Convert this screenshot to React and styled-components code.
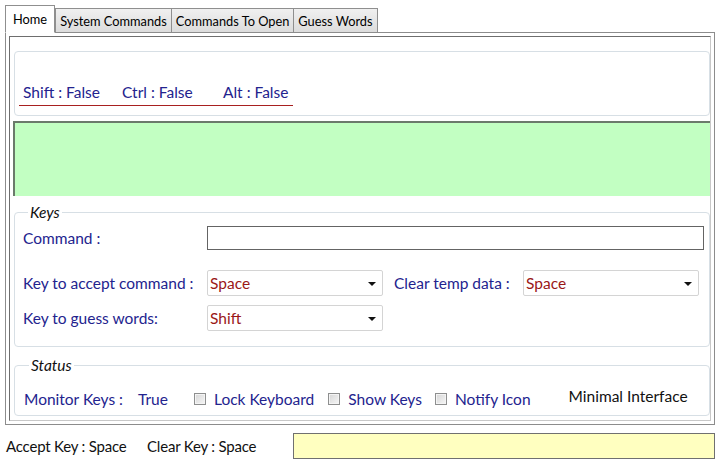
import React from 'react';
import styled, { createGlobalStyle } from 'styled-components';

const GlobalStyle = createGlobalStyle`
  html, body { margin: 0; padding: 0; background: #fff; }
  body { font-family: Lato, "Liberation Sans", sans-serif; }
`;

const Window = styled.div`
  width: 721px;
  height: 466px;
  display: flex;
  flex-direction: column;
  background: #fff;
`;

const TabStrip = styled.div`
  display: flex;
  align-items: flex-end;
  height: 32px;
  padding-left: 5px;
  position: relative;
  z-index: 1;
`;

const Tab = styled.div`
  box-sizing: border-box;
  height: ${p => (p.$active ? '28px' : '24px')};
  padding: 0 ${p => (p.$active ? '7px' : '4px')};
  margin-bottom: ${p => (p.$active ? '-1px' : '0')};
  border: 1px solid #8f8f8f;
  border-bottom: ${p => (p.$active ? '1px solid #fff' : 'none')};
  background: ${p => (p.$active ? '#fff' : 'linear-gradient(#f0f0f0, #dcdcdc)')};
  font-size: 12.8px;
  color: #000;
  display: flex;
  align-items: center;
  margin-left: ${p => (p.$active ? '0' : '-1px')};
  &:nth-child(2) { margin-left: 0; }
`;

const Panel = styled.div`
  margin: 0 6px 0 5px;
  height: 393px;
  box-sizing: border-box;
  border: 1px solid #8c8c8c;
  padding: 3px;
`;

const Inner = styled.div`
  height: 100%;
  box-sizing: border-box;
  border: 1px solid #6e6e6e;
  border-right-color: #c8c8c8;
  border-bottom-color: #c8c8c8;
  padding: 14px 0 3px 4px;
  display: flex;
  flex-direction: column;
`;

const ModBox = styled.div`
  height: 65px;
  border: 1px solid #d7dfe5;
  border-radius: 4px;
  display: flex;
  align-items: flex-end;
  padding: 0 0 9px 4px;
  box-sizing: border-box;
`;

const ModLine = styled.div`
  display: flex;
  padding: 0 5px 4px 4px;
  border-bottom: 1px solid #a82020;
`;

const Label = styled.span`
  color: #23238e;
  font-size: 15.5px;
  white-space: nowrap;
  width: ${p => p.$w || 'auto'};
  flex-shrink: 0;
`;

const Screen = styled.div`
  margin: 5px 0 0 -1px;
  height: 75px;
  background: #c2ffc2;
  border-top: 2px solid #6b7a6b;
  border-left: 2px solid #6b7a6b;
  box-sizing: border-box;
`;

const Group = styled.fieldset`
  margin: ${p => p.$top} 0 0 0;
  padding: ${p => p.$pad};
  border: 1px solid #d7dfe5;
  border-radius: 4px;
  min-width: 0;
  display: flex;
  flex-direction: column;
`;

const Legend = styled.legend`
  font-style: italic;
  font-size: 15.5px;
  color: #111;
  padding: 0 2px;
  margin-left: 5px;
  line-height: 17px;
`;

const Row = styled.div`
  display: flex;
  align-items: center;
  margin-top: ${p => p.$mt || '0'};
`;

const TextBox = styled.div`
  width: 497px;
  height: 24px;
  box-sizing: border-box;
  border: 1px solid #646464;
  background: #fff;
`;

const Select = styled.div`
  width: 176px;
  height: 26px;
  box-sizing: border-box;
  border: 1px solid #d4d4d4;
  border-radius: 2px;
  background: #fff;
  display: flex;
  align-items: center;
  justify-content: space-between;
  padding: 0 6px 0 2px;
  color: #9a1717;
  font-size: 15.5px;
  margin-right: ${p => p.$mr || '0'};
`;

const Caret = styled.span`
  width: 0;
  height: 0;
  border-left: 4px solid transparent;
  border-right: 4px solid transparent;
  border-top: 4px solid #111;
  margin-top: 2px;
`;

const CheckItem = styled.label`
  display: flex;
  align-items: center;
  gap: 8px;
  margin-right: ${p => p.$mr || '0'};
`;

const Box = styled.span`
  width: 12px;
  height: 12px;
  box-sizing: border-box;
  border: 1px solid #8e8f8f;
  background: linear-gradient(135deg, #d6d6d6, #f6f6f6);
  box-shadow: inset 0 0 0 1px #f4f4f4;
`;

const Plain = styled.span`
  font-size: 15.5px;
  color: #111;
  white-space: nowrap;
  margin-left: ${p => p.$ml || '0'};
  margin-top: ${p => p.$mt || '0'};
`;

const Footer = styled.div`
  display: flex;
  align-items: center;
  height: 41px;
  padding: 0 6px 0 6px;
`;

const FooterText = styled.span`
  font-size: 15px;
  color: #111;
  white-space: nowrap;
  letter-spacing: -0.2px;
  width: ${p => p.$w};
  flex-shrink: 0;
`;

const YellowBox = styled.div`
  flex: 1;
  height: 26px;
  box-sizing: border-box;
  border: 1px solid #707070;
  background: #ffffc0;
`;

const Dropdown = ({ value, mr }) => (
  <Select $mr={mr}>
    <span>{value}</span>
    <Caret />
  </Select>
);

const Check = ({ text, mr }) => (
  <CheckItem $mr={mr}>
    <Box />
    <Label>{text}</Label>
  </CheckItem>
);

export default function App() {
  return (
    <Window>
      <GlobalStyle />
      <TabStrip>
        <Tab $active>Home</Tab>
        <Tab>System Commands</Tab>
        <Tab>Commands To Open</Tab>
        <Tab>Guess Words</Tab>
      </TabStrip>
      <Panel>
        <Inner>
          <ModBox>
            <ModLine>
              <Label $w="99px">Shift : False</Label>
              <Label $w="101px">Ctrl : False</Label>
              <Label>Alt : False</Label>
            </ModLine>
          </ModBox>
          <Screen />
          <Group $top="8px" $pad="0 4px 15px 8px">
            <Legend>Keys</Legend>
            <Row $mt="5px">
              <Label $w="184px">Command :</Label>
              <TextBox />
            </Row>
            <Row $mt="20px">
              <Label $w="184px">Key to accept command :</Label>
              <Dropdown value="Space" mr="11px" />
              <Label $w="129px">Clear temp data :</Label>
              <Dropdown value="Space" />
            </Row>
            <Row $mt="9px">
              <Label $w="184px">Key to guess words:</Label>
              <Dropdown value="Shift" />
            </Row>
          </Group>
          <Group $top="10px" $pad="0 4px 7px 9px">
            <Legend>Status</Legend>
            <Row $mt="16px">
              <Label $w="114px">Monitor Keys :</Label>
              <Label $w="56px">True</Label>
              <Check text="Lock Keyboard" mr="14px" />
              <Check text="Show Keys" mr="13px" />
              <Check text="Notify Icon" />
              <Plain $ml="38px" $mt="-6px">Minimal Interface</Plain>
            </Row>
          </Group>
        </Inner>
      </Panel>
      <Footer>
        <FooterText $w="141px">Accept Key : Space</FooterText>
        <FooterText $w="146px">Clear Key : Space</FooterText>
        <YellowBox />
      </Footer>
    </Window>
  );
}
